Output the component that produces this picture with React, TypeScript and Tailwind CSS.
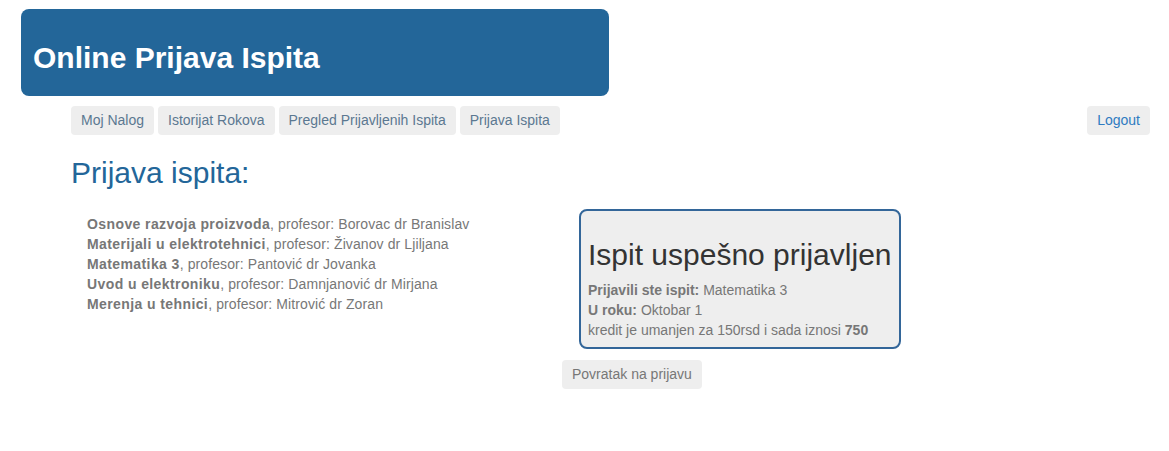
import React from 'react';

const predmeti = [
  { naziv: 'Osnove razvoja proizvoda', profesor: 'Borovac dr Branislav' },
  { naziv: 'Materijali u elektrotehnici', profesor: 'Živanov dr Ljiljana' },
  { naziv: 'Matematika 3', profesor: 'Pantović dr Jovanka' },
  { naziv: 'Uvod u elektroniku', profesor: 'Damnjanović dr Mirjana' },
  { naziv: 'Merenja u tehnici', profesor: 'Mitrović dr Zoran' },
];

const navLinks = ['Moj Nalog', 'Istorijat Rokova', 'Pregled Prijavljenih Ispita', 'Prijava Ispita'];

export default function App() {
  return (
    <div className="min-h-[451px] bg-white font-['Liberation_Sans',Arial,sans-serif] text-[14px] text-[#777]">
      {/* Header */}
      <div className="pt-[9px] pl-[21px]">
        <div className="flex h-[87px] w-[588px] items-center rounded-lg bg-[#236699] pl-3 pt-[10px]">
          <h1 className="text-[30px] font-bold text-white">Online Prijava Ispita</h1>
        </div>
      </div>

      {/* Nav */}
      <div className="mt-[10px] flex items-center pl-[71px] pr-[19px]">
        <div className="flex gap-1">
          {navLinks.map((l) => (
            <a key={l} className="rounded bg-[#eee] px-[10px] py-[6px] leading-[17px] text-[#5b7891]">
              {l}
            </a>
          ))}
        </div>
        <a className="ml-auto rounded bg-[#eee] px-[10px] py-[6px] leading-[17px] text-[#2f7bc1]">Logout</a>
      </div>

      {/* Content */}
      <div className="pl-[71px]">
        <h2 className="mt-[20px] text-[30px] leading-[36px] text-[#236699]">Prijava ispita:</h2>

        <div className="mt-[23px] flex items-start">
          <ul className="w-[508px] pl-4 leading-[20px] tracking-[0.1px]">
            {predmeti.map((p) => (
              <li key={p.naziv}>
                <b className="tracking-[0.4px]">{p.naziv}</b>, profesor: {p.profesor}
              </li>
            ))}
          </ul>

          <div className="mt-[-5px] w-[322px] rounded-lg border-2 border-[#336699] bg-[#eee] px-[7px] pt-[26px] pb-[7px] leading-[20px]">
            <h3 className="mb-[7px] text-[30px] leading-[36px] text-[#333]">Ispit uspešno prijavljen</h3>
            <p>
              <b>Prijavili ste ispit:</b> Matematika 3
            </p>
            <p>
              <b>U roku:</b> Oktobar 1
            </p>
            <p>
              kredit je umanjen za 150rsd i sada iznosi <b>750</b>
            </p>
          </div>
        </div>

        <div className="mt-[11px] pl-[491px]">
          <button className="rounded bg-[#eee] px-[10px] py-[6px] leading-[17px] text-[#777]">Povratak na prijavu</button>
        </div>
      </div>
    </div>
  );
}
